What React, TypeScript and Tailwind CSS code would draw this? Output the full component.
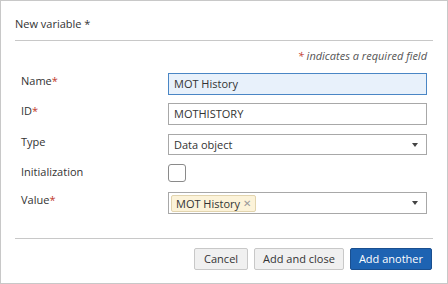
function Req() {
  return <span className="text-[#c0392b]">*</span>;
}

function Caret() {
  return (
    <svg width="6" height="4" viewBox="0 0 6 4" className="ml-auto">
      <path d="M0 0h6L3 4z" fill="#444" />
    </svg>
  );
}

function Row({ label, children }: { label: React.ReactNode; children: React.ReactNode }) {
  return (
    <div className="flex items-start pl-[6px]">
      <div className="w-[147px] leading-[16px]">{label}</div>
      <div className="w-[259px]">{children}</div>
    </div>
  );
}

export default function App() {
  return (
    <div
      className="w-[448px] h-[284px] border border-[#c8c8c8] bg-white px-[14px] text-[11px] text-[#333]"
      style={{ fontFamily: '"Open Sans", sans-serif' }}
    >
      <div className="pt-[15px] pb-[8px] leading-[16px] text-[#333]">New variable *</div>
      <div className="border-t border-[#c8c8c8]" />
      <div className="mt-[7px] pr-[6px] text-right italic leading-[16px] text-[#555]">
        <span className="text-[#c0392b]">*</span> indicates a required field
      </div>

      <div className="mt-[9px] flex flex-col">
        <Row label={<>Name<Req /></>}>
          <div className="h-[22px] border border-[#4a86c5] bg-[#e8f1fb] px-[5px] leading-[20px]">MOT History</div>
        </Row>
        <div className="h-[8px]" />
        <Row label={<>ID<Req /></>}>
          <div className="h-[22px] border border-[#a8a8a8] bg-white px-[5px] leading-[20px]">MOTHISTORY</div>
        </Row>
        <div className="h-[9px]" />
        <Row label="Type">
          <div className="flex h-[21px] items-center border border-[#a8a8a8] bg-white pl-[5px] pr-[8px]">
            <span className="leading-[19px]">Data object</span>
            <Caret />
          </div>
        </Row>
        <div className="h-[9px]" />
        <Row label="Initialization">
          <div className="h-[18px] w-[18px] rounded-[3px] border border-[#8a8a8a] bg-white" />
        </Row>
        <div className="h-[10px]" />
        <Row label={<>Value<Req /></>}>
          <div className="flex h-[22px] items-center border border-[#a8a8a8] bg-white pl-[2px] pr-[8px]">
            <span className="flex h-[17px] items-center rounded-[2px] border border-[#e2d4ae] bg-[#fcf3d9] pl-[4px] pr-[4px] leading-[15px]">
              MOT History
              <span className="ml-[3px] text-[10px] text-[#999]">✕</span>
            </span>
            <Caret />
          </div>
        </Row>
      </div>

      <div className="mt-[24px] border-t border-[#c8c8c8]" />
      <div className="mt-[9px] flex justify-end gap-[6px] pr-[1px]">
        <button className="h-[22px] rounded-[2px] border border-[#c8c8c8] bg-[#f0f0f0] px-[9px] leading-[20px] text-[#333]">Cancel</button>
        <button className="h-[22px] rounded-[2px] border border-[#c8c8c8] bg-[#f0f0f0] px-[8px] leading-[20px] text-[#333]">Add and close</button>
        <button className="h-[22px] rounded-[2px] border border-[#1a4f8f] bg-[#1e63b2] px-[8px] leading-[20px] text-white">Add another</button>
      </div>
    </div>
  );
}
